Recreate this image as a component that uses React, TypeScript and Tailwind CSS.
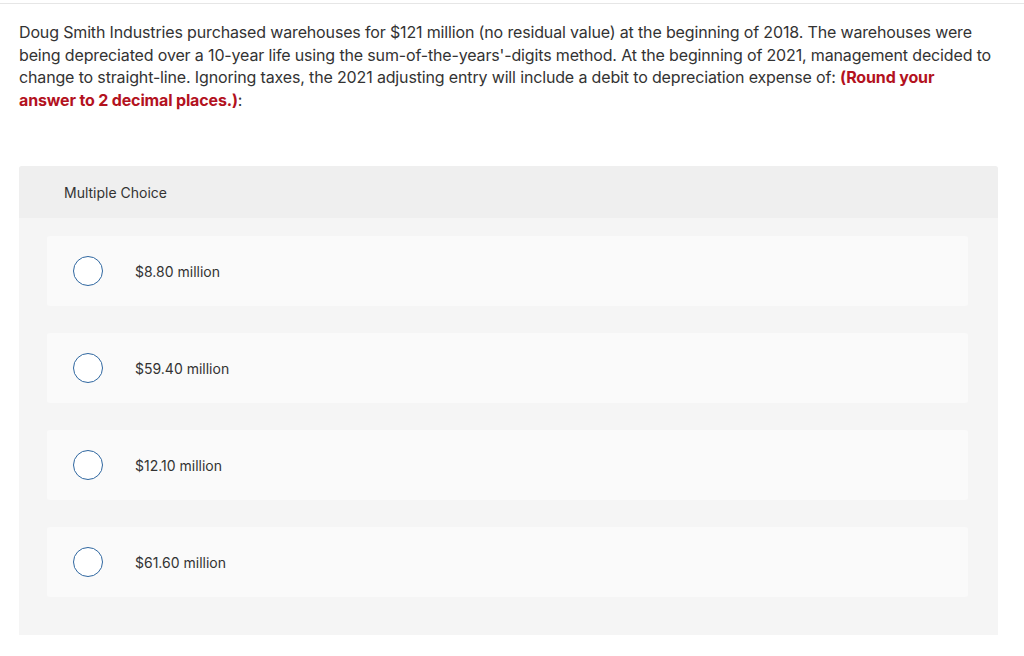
import { useState } from 'react';

const choices = ['$8.80 million', '$59.40 million', '$12.10 million', '$61.60 million'];

export default function App() {
  const [picked, setPicked] = useState<number | null>(null);

  return (
    <div className="min-h-[656px] bg-white text-[#333] font-['Inter','Liberation_Sans',sans-serif]">
      <div className="h-[3px]" />
      <div className="h-px bg-[#e6e6e6]" />
      <div className="px-[19px] pt-[17px] pr-[26px]">
        <p className="text-[16px] leading-[22.5px] tracking-[-0.15px]">
          Doug Smith Industries purchased warehouses for $121 million (no residual value) at the beginning of 2018. The
          warehouses were
          <br />
          being depreciated over a 10-year life using the sum-of-the-years'-digits method. At the beginning of 2021,
          management decided to
          <br />
          change to straight-line. Ignoring taxes, the 2021 adjusting entry will include a debit to depreciation expense
          of: <strong className="font-bold text-[#b3121e]">(Round your</strong>
          <br />
          <strong className="font-bold text-[#b3121e]">answer to 2 decimal places.)</strong>:
        </p>

        <div className="mt-[55px] w-[979px] rounded-t-[3px] bg-[#f5f5f5]">
          <div className="flex h-[52px] items-center rounded-t-[3px] bg-[#efefef] pl-[45px] text-[14px]">
            Multiple Choice
          </div>
          <div className="flex flex-col gap-[27px] pl-[28px] pr-[30px] pt-[18px] pb-[38px]">
            {choices.map((c, i) => (
              <button
                key={c}
                onClick={() => setPicked(i)}
                className="flex h-[70px] items-center rounded-[3px] bg-[#fafafa] text-left text-[14px]"
              >
                <span className="ml-[26px] flex h-[30px] w-[30px] items-center justify-center rounded-full border-[1.5px] border-[#2f67a0] bg-white">
                  {picked === i && <span className="h-[16px] w-[16px] rounded-full bg-[#2f67a0]" />}
                </span>
                <span className="ml-[32px]">{c}</span>
              </button>
            ))}
          </div>
        </div>
      </div>
    </div>
  );
}
